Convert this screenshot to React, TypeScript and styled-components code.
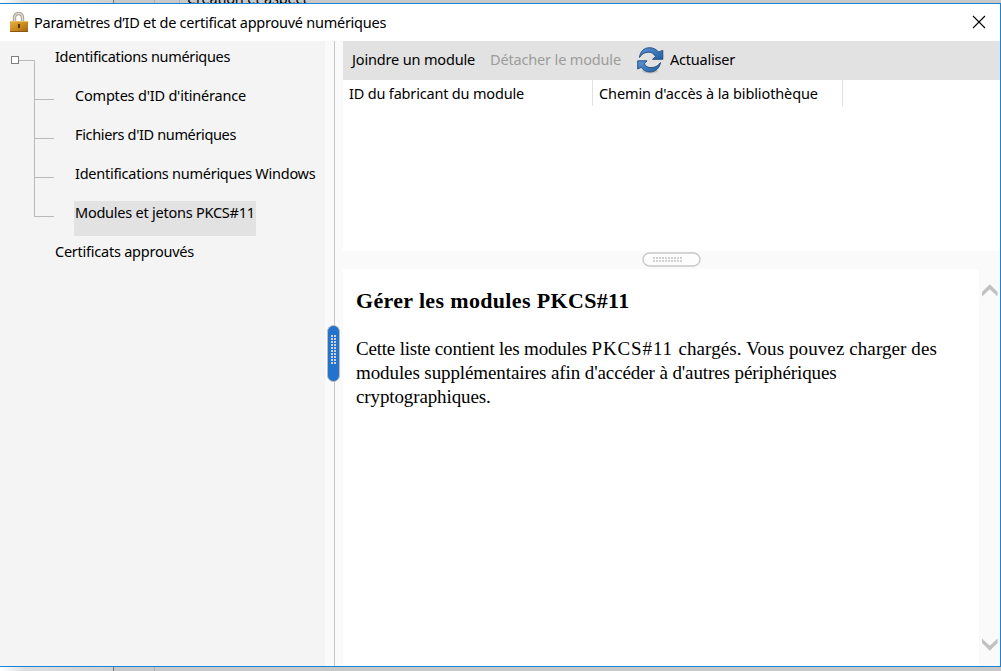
import React from "react";
import styled, { createGlobalStyle } from "styled-components";

const Global = createGlobalStyle`
  * { box-sizing: border-box; }
  body { margin: 0; overflow: hidden; font-family: "Noto Sans", "Open Sans", sans-serif; font-size: 14.5px; color: #000; background: #fff; }
`;

const Screen = styled.div`
  width: 1001px;
  height: 671px;
  display: flex;
  flex-direction: column;
`;

const Backdrop = styled.div<{ $h: number }>`
  height: ${(p) => p.$h}px;
  flex: none;
  display: flex;
  overflow: hidden;
  background: #c8c8c8;
`;
const BackdropPane = styled.div`
  width: 114px;
  border-right: 1px solid #777;
  background: linear-gradient(90deg, #fff, #ddd 24px, #d0d0d0);
`;
const BackdropGutter = styled.div<{ $w: number }>`
  width: ${(p) => p.$w}px;
  border-right: 1px solid #b2b2b2;
`;
const BackdropLabel = styled.div`
  margin-left: 7px;
  line-height: 20px;
  margin-top: -12px;
  letter-spacing: -0.15px;
  white-space: nowrap;
`;

const Dialog = styled.div`
  flex: 1;
  min-height: 0;
  display: flex;
  flex-direction: column;
  border: 1px solid #1883d7;
  border-left: 0;
  background: #fff;
`;

const Label = styled.span<{ $ls?: number }>`
  white-space: nowrap;
  line-height: 20px;
  letter-spacing: ${(p) => p.$ls ?? -0.25}px;
`;

const TitleBar = styled.div`
  height: 37px;
  flex: none;
  display: flex;
  align-items: center;
  padding: 0 14px 1px 9px;
`;
const Title = styled(Label)`
  flex: 1;
  margin-left: 6px;
`;

const Body = styled.div`
  flex: 1;
  min-height: 0;
  display: flex;
`;

const Sidebar = styled.div`
  width: 325px;
  flex: none;
  background: #f4f4f4;
  display: flex;
`;
const TreeLines = styled.svg`
  flex: none;
  display: block;
`;
const TreeItems = styled.div`
  display: flex;
  flex-direction: column;
  gap: 4px;
  padding-top: 4px;
`;
const TreeItem = styled.div<{ $child?: boolean; $selected?: boolean }>`
  height: 35px;
  align-self: flex-start;
  display: flex;
  padding: 1px 1px 0;
  margin-left: ${(p) => (p.$child ? 20 : 0)}px;
  background: ${(p) => (p.$selected ? "#e2e2e2" : "transparent")};
`;

const Splitter = styled.div`
  width: 18px;
  flex: none;
  position: relative;
  display: flex;
  background: #fafafa;
`;
const SplitterLine = styled.div`
  width: 1px;
  margin-left: 9px;
  background: #c6c6c6;
`;
const VerticalGrip = styled.svg`
  position: absolute;
  left: 1px;
  top: 283px;
`;

const Main = styled.div`
  flex: 1;
  min-width: 0;
  display: flex;
  flex-direction: column;
`;
const Toolbar = styled.div`
  height: 39px;
  flex: none;
  display: flex;
  align-items: center;
  padding: 0 0 2px 9px;
  background: #e2e2e2;
`;
const ToolButton = styled.div<{ $w: number; $disabled?: boolean }>`
  width: ${(p) => p.$w}px;
  display: flex;
  align-items: center;
  gap: 6px;
  color: ${(p) => (p.$disabled ? "#9c9c9c" : "#000")};

  ${Label} {
    margin-bottom: 2px;
  }
`;
const ListPane = styled.div`
  height: 171px;
  flex: none;
  display: flex;
  align-items: flex-start;
`;
const ColumnHeader = styled.div<{ $w: number }>`
  width: ${(p) => p.$w}px;
  height: 26px;
  display: flex;
  align-items: center;
  padding: 0 0 0 6px;
  border-right: 1px solid #e2e2e2;
`;
const HorizontalSplitter = styled.div`
  height: 18px;
  flex: none;
  background: #fafafa;
  padding-left: 299px;
`;
const Detail = styled.div`
  flex: 1;
  min-height: 0;
  display: flex;
`;
const Article = styled.article`
  flex: 1;
  padding: 18px 0 0 13px;
  font-family: "Liberation Serif", serif;
`;
const Heading = styled.h1`
  margin: 0 0 22px;
  font-size: 22px;
  line-height: 28px;
  letter-spacing: 0.34px;
`;
const Line = styled.div`
  font-size: 19px;
  line-height: 24px;
  white-space: nowrap;
`;
const Run = styled.span<{ $ls: number }>`
  letter-spacing: ${(p) => p.$ls}px;
`;
const ScrollBar = styled.div`
  width: 21px;
  flex: none;
  display: flex;
  flex-direction: column;
  justify-content: space-between;
  padding: 15px 2px 15px 3px;
  background: #fafafa;
`;

const Lock = () => (
  <svg width="19" height="21" viewBox="0 0 19 21">
    <defs>
      <linearGradient id="brass" x1="0" y1="0" x2="1" y2="1">
        <stop offset="0" stopColor="#e6b149" />
        <stop offset="0.5" stopColor="#cc8c20" />
        <stop offset="1" stopColor="#a3640f" />
      </linearGradient>
    </defs>
    <path d="M5.500 11V5.500a4 4 0 0 1 8 0V11" fill="none" stroke="#a39f91" strokeWidth="3.400" />
    <path d="M5.500 11V5.500a4 4 0 0 1 8 0V11" fill="none" stroke="#dedbcf" strokeWidth="1.500" />
    <rect x="1" y="9" width="18" height="11" rx="0.5" fill="url(#brass)" />
    <path d="M1 9.500h18" stroke="#e9c060" />
    <path d="M1 19.500h18" stroke="#8a540b" />
    <path d="M10 12v4" stroke="#553209" strokeWidth="2" />
  </svg>
);

const Refresh = () => (
  <svg width="27" height="28" viewBox="0 0 27 28">
    <defs>
      <linearGradient id="blue" x1="0" y1="0" x2="1" y2="1">
        <stop offset="0" stopColor="#5c92d6" />
        <stop offset="1" stopColor="#22609f" />
      </linearGradient>
    </defs>
    <ellipse cx="13" cy="25" rx="8" ry="2.500" fill="#000" opacity="0.13" />
    <g stroke="#1c4a7c" strokeWidth="0.9" fill="url(#blue)" strokeLinejoin="round">
      <path d="M2.500 11.500C3 5.500 7 1.700 12.500 1.700c4 0 7 1.800 9 4.300l4.300-1.600V13.300H15.500l3-2.800c-1.500-2.800-4-4.300-7-4.300-4 0-7 2-9 5.300z" />
      <path d="M23.500 16.500c-.8 5.500-5 9.500-10.500 9.500-4 0-7-2-8.700-4.700L0.700 23V14.800H10l-2.700 3c1.500 2.800 3.700 3.800 6.700 3.800 4 0 7.500-1.800 9.500-5.100z" />
    </g>
  </svg>
);

const Dots = ({ cols, rows, x, y }: { cols: number; rows: number; x: number; y: number }) => (
  <>
    {Array.from({ length: cols * rows }, (_, i) => (
      <rect key={i} x={x + (i % cols) * 3} y={y + Math.floor(i / cols) * 3} width="2" height="2" fill="#d0d0d0" />
    ))}
  </>
);

const items = [
  { text: "Identifications numériques", ls: -0.33 },
  { text: "Comptes d'ID d'itinérance", child: true, ls: -0.2 },
  { text: "Fichiers d'ID numériques", child: true, ls: -0.36 },
  { text: "Identifications numériques Windows", child: true, ls: -0.26 },
  { text: "Modules et jetons PKCS#11", child: true, selected: true, ls: -0.24 },
  { text: "Certificats approuvés", ls: -0.24 },
];

export default function App() {
  return (
    <Screen>
      <Global />
      <Backdrop $h={3}>
        <BackdropPane />
        <BackdropGutter $w={41} />
        <BackdropGutter $w={25} />
        <BackdropLabel>Création et aspect</BackdropLabel>
      </Backdrop>
      <Dialog>
        <TitleBar>
          <Lock />
          <Title>Paramètres d’ID et de certificat approuvé numériques</Title>
          <svg width="14" height="14" viewBox="0 0 14 14">
            <path d="M1 1l12 12M13 1L1 13" stroke="#000" strokeWidth="1.100" />
          </svg>
        </TitleBar>
        <Body>
          <Sidebar>
            <TreeLines width="54" height="180" viewBox="0 0 54 180">
              <rect x="11.500" y="15.500" width="7" height="7" fill="#fff" stroke="#808080" />
              <path d="M19 19.500h15.500v156M34.500 58.500H54M34.500 97.500H54M34.500 136.500H54M34 175.500H54" fill="none" stroke="#b9b9b9" />
            </TreeLines>
            <TreeItems>
              {items.map((it) => (
                <TreeItem key={it.text} $child={it.child} $selected={it.selected}>
                  <Label $ls={it.ls}>{it.text}</Label>
                </TreeItem>
              ))}
            </TreeItems>
          </Sidebar>
          <Splitter>
            <SplitterLine />
            <VerticalGrip width="15" height="59" viewBox="0 0 15 59">
              <rect x="1.500" y="1.500" width="12" height="56" rx="6" fill="#2273cb" stroke="#bdbdbd" />
              <Dots cols={2} rows={10} x={5} y={11} />
            </VerticalGrip>
          </Splitter>
          <Main>
            <Toolbar>
              <ToolButton $w={138}><Label $ls={-0.16}>Joindre un module</Label></ToolButton>
              <ToolButton $w={147} $disabled><Label $ls={-0.16}>Détacher le module</Label></ToolButton>
              <ToolButton $w={110}><Refresh /><Label $ls={-0.22}>Actualiser</Label></ToolButton>
            </Toolbar>
            <ListPane>
              <ColumnHeader $w={250}><Label $ls={-0.18}>ID du fabricant du module</Label></ColumnHeader>
              <ColumnHeader $w={250}><Label $ls={-0.12}>Chemin d'accès à la bibliothèque</Label></ColumnHeader>
            </ListPane>
            <HorizontalSplitter>
              <svg width="59" height="16" viewBox="0 0 59 16">
                <rect x="1" y="2" width="57" height="13" rx="6.500" fill="#fdfdfd" stroke="#c8c8c8" strokeWidth="1.400" />
                <Dots cols={10} rows={2} x={11} y={6} />
              </svg>
            </HorizontalSplitter>
            <Detail>
              <Article>
                <Heading>Gérer les modules PKCS#11</Heading>
                <Line>
                  <Run $ls={-0.2}>Cette liste contient les modules </Run>
                  <Run $ls={0.85}>PKCS#11 </Run>
                  <Run $ls={0.09}>chargés. Vous pouvez charger des</Run>
                </Line>
                <Line><Run $ls={-0.1}>modules supplémentaires afin d'accéder à d'autres périphériques</Run></Line>
                <Line><Run $ls={-0.12}>cryptographiques.</Run></Line>
              </Article>
              <ScrollBar>
                <svg width="16" height="13" viewBox="0 0 16 13"><path d="M0 12.500V8L7.800 0.300L15.500 8V12.500L7.800 5.300z" fill="#c1c1c1" /></svg>
                <svg width="16" height="13" viewBox="0 0 16 13"><path d="M0 0.500V5L7.800 12.700L15.500 5V0.500L7.800 7.700z" fill="#c1c1c1" /></svg>
              </ScrollBar>
            </Detail>
          </Main>
        </Body>
      </Dialog>
      <Backdrop $h={4}>
        <BackdropPane />
        <BackdropGutter $w={41} />
      </Backdrop>
    </Screen>
  );
}
